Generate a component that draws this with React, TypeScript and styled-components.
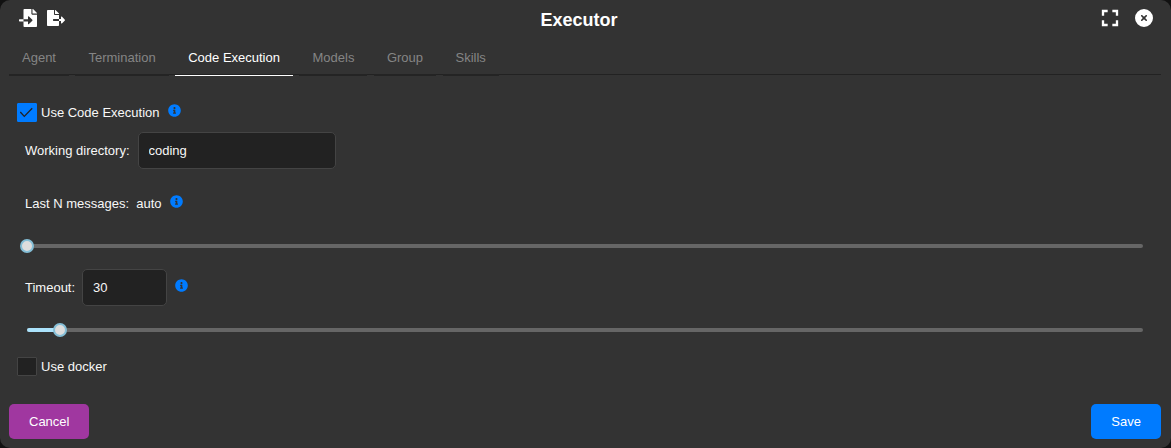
import React from "react";
import styled, { createGlobalStyle } from "styled-components";
import { FaFileImport, FaFileExport, FaInfoCircle } from "react-icons/fa";
import { FaCircleXmark } from "react-icons/fa6";
import { MdFullscreen } from "react-icons/md";

const GlobalStyle = createGlobalStyle`
  *, *::before, *::after { box-sizing: border-box; }
  body { margin: 0; background: #111; }
`;

const Dialog = styled.div`
  display: flex;
  flex-direction: column;
  height: 448px;
  padding: 0 10px 9px 9px;
  border-radius: 10px;
  background: #333;
  color: #f8f8f8;
  font: 13px/20px "Liberation Sans", Arial, sans-serif;
`;

const Header = styled.header`
  display: flex;
  justify-content: space-between;
  height: 40px;
  align-items: start;
`;

const Title = styled.h1`
  margin: 0;
  padding: 8px 3px 0 0;
  font-size: 18px;
  line-height: 24px;
  font-weight: bold;
  color: #fff;
`;

const FileActions = styled.div`
  display: flex;
  align-items: center;
  gap: 10px;
  padding: 9px 0 0 10px;
  color: #fff;
  svg { display: block; }
`;

const WindowActions = styled.div`
  display: flex;
  justify-content: flex-end;
  align-items: center;
  gap: 11px;
  padding: 4px 8px 0 0;
  color: #fff;
  svg { display: block; }
`;

const TabBar = styled.nav`
  display: flex;
  gap: 6.5px;
  height: 35px;
  border-bottom: 1px solid #222;
`;

const Tab = styled.div<{ $active?: boolean }>`
  height: 36px;
  padding: 8px 13px 0;
  border-bottom: ${(p) => (p.$active ? "1px solid #fff" : "2px solid #242424")};
  color: ${(p) => (p.$active ? "#fff" : "#858585")};
`;

const Panel = styled.main`
  display: flex;
  flex: 1;
  flex-direction: column;
  padding: 28px 8px 0;
`;

const CheckRow = styled.label`
  display: flex;
  align-items: center;
  gap: 4px;
  height: 19px;
`;

const DockerRow = styled(CheckRow)`
  margin-top: 25px;
`;

const Box = styled.span<{ $checked?: boolean }>`
  display: grid;
  place-items: center;
  width: 20px;
  height: 19px;
  border: 1px solid ${(p) => (p.$checked ? "#007bff" : "#444")};
  border-radius: 1px;
  background: ${(p) => (p.$checked ? "#007bff" : "#222")};
`;

const Info = styled(FaInfoCircle)<{ $gap: number }>`
  display: block;
  width: 13px;
  height: 13px;
  margin: 0 0 4px ${(p) => p.$gap}px;
  color: #007bff;
`;

const FieldRow = styled.div<{ $top: number }>`
  display: flex;
  align-items: center;
  height: 37px;
  margin-top: ${(p) => p.$top}px;
  padding-left: 8px;
  white-space: pre;
`;

const Input = styled.input<{ $width: number; $gap: number }>`
  width: ${(p) => p.$width}px;
  height: 37px;
  margin: 0 0 0 ${(p) => p.$gap}px;
  padding: 0 10px;
  border: 1px solid #444;
  border-radius: 5px;
  outline: none;
  background: #222;
  color: #f8f8f8;
  font: inherit;
`;

const Slider = styled.div`
  display: flex;
  align-items: center;
  height: 4px;
  margin: 22px 10px 0;
  border-radius: 2px;
  background: #666;
`;

const Fill = styled.div`
  height: 4px;
  border-radius: 2px 0 0 2px;
  background: #abe2fb;
`;

const Thumb = styled.div`
  flex: none;
  width: 14px;
  height: 14px;
  margin-left: -7px;
  border: 2px solid #84bed6;
  border-radius: 50%;
  background: #ddd;
`;

const Footer = styled.footer`
  display: flex;
  justify-content: space-between;
`;

const Button = styled.button<{ $color: string }>`
  height: 35px;
  padding: 0 20px;
  border: 0;
  border-radius: 5px;
  background: ${(p) => p.$color};
  color: #fff;
  font: inherit;
`;

const tabs = ["Agent", "Termination", "Code Execution", "Models", "Group", "Skills"];

export default function App() {
  return (
    <>
      <GlobalStyle />
      <Dialog>
        <Header>
          <FileActions>
            <FaFileImport size={18} />
            <FaFileExport size={18} />
          </FileActions>
          <Title>Executor</Title>
          <WindowActions>
            <MdFullscreen size={28} />
            <FaCircleXmark size={18} />
          </WindowActions>
        </Header>
        <TabBar>
          {tabs.map((name) => (
            <Tab key={name} $active={name === "Code Execution"}>{name}</Tab>
          ))}
        </TabBar>
        <Panel>
          <CheckRow>
            <Box $checked>
              <svg width="14" height="12" viewBox="0 0 14 12" fill="none" stroke="#222" strokeWidth="1.3">
                <path d="M0.3 5 4.3 9.4 12.2 1.2" />
              </svg>
            </Box>
            Use Code Execution
            <Info $gap={4} />
          </CheckRow>
          <FieldRow $top={10}>
            Working directory:
            <Input $width={198} $gap={8} defaultValue="coding" />
          </FieldRow>
          <FieldRow $top={16}>
            {"Last N messages:  auto"}
            <Info $gap={8} />
          </FieldRow>
          <Slider>
            <Thumb />
          </Slider>
          <FieldRow $top={21}>
            Timeout:
            <Input $width={85} $gap={7} defaultValue="30" />
            <Info $gap={8} />
          </FieldRow>
          <Slider>
            <Fill style={{ width: `${(30 / 1000) * 100}%` }} />
            <Thumb />
          </Slider>
          <DockerRow>
            <Box />
            Use docker
          </DockerRow>
        </Panel>
        <Footer>
          <Button $color="#a037a0">Cancel</Button>
          <Button $color="#007bff">Save</Button>
        </Footer>
      </Dialog>
    </>
  );
}
